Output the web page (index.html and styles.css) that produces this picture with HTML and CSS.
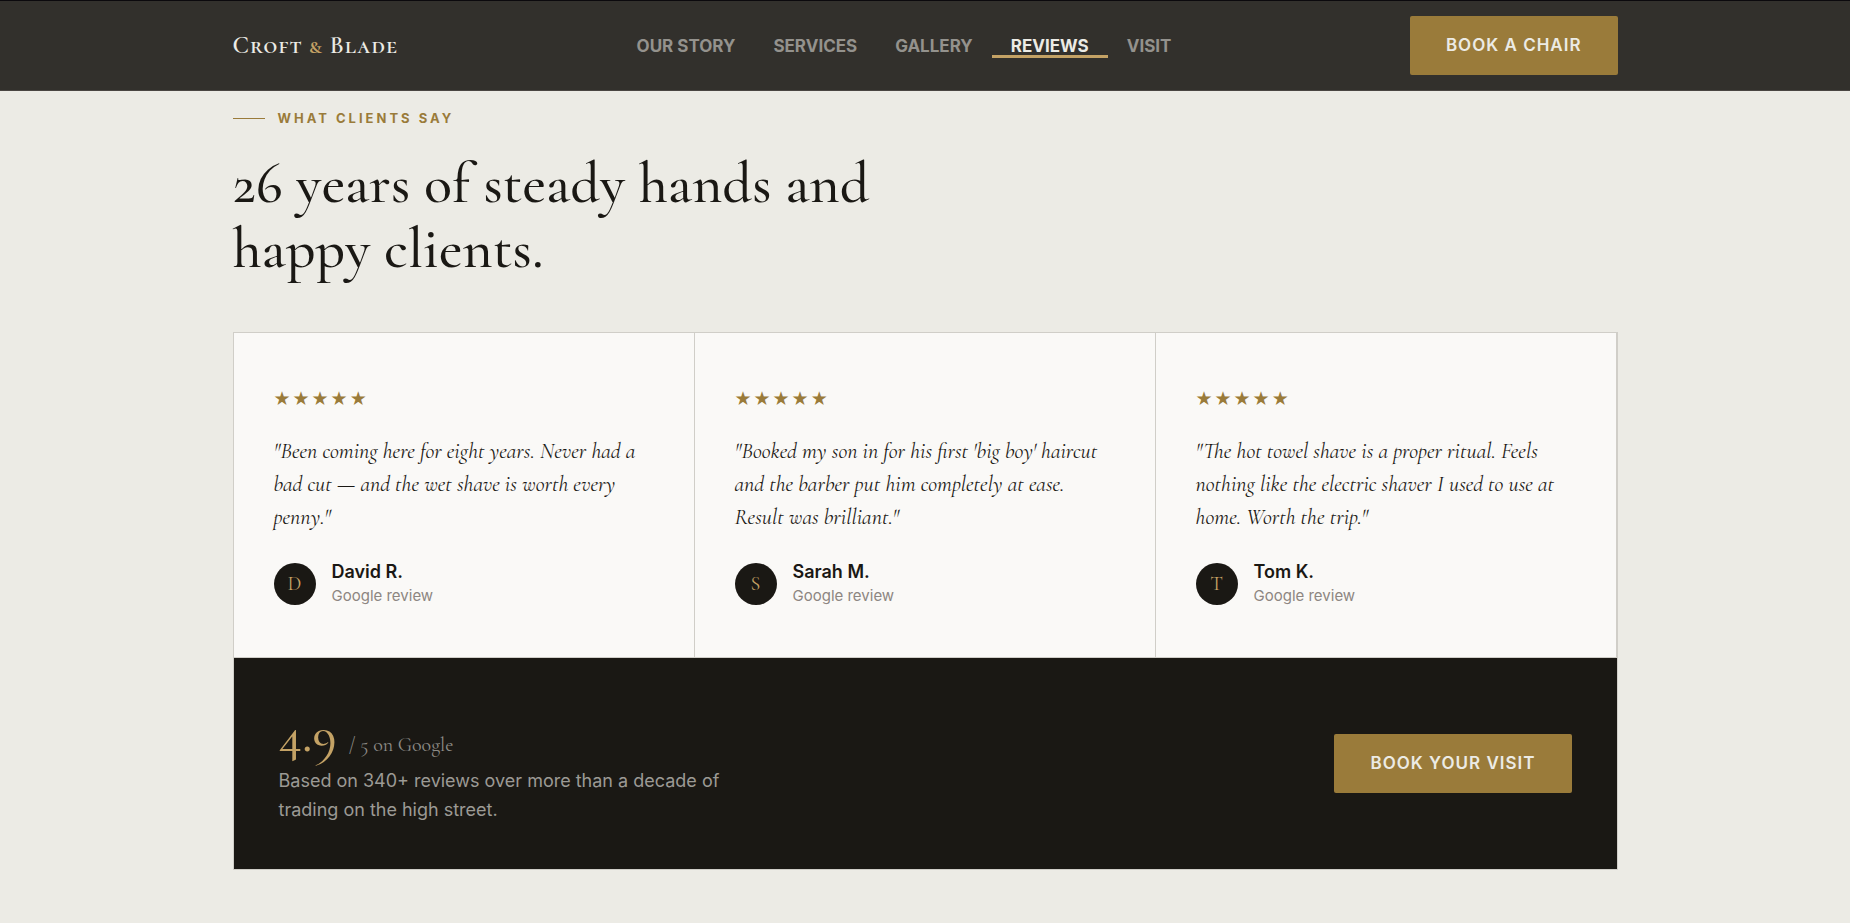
FILE: index.html
```html
<!DOCTYPE html>
<html lang="en">

<head>
    <meta charset="UTF-8">
    <meta name="viewport" content="width=device-width, initial-scale=1.0">
    <title>Croft &amp; Blade</title>
    <link rel="stylesheet" href="styles.css">
</head>

<body>
    <header class="site-header">
        <div class="container header-inner">
            <a class="logo" href="#">Croft <span>&amp;</span> Blade</a>
            <nav class="nav">
                <a href="#story">Our Story</a>
                <a href="#services">Services</a>
                <a href="#gallery">Gallery</a>
                <a href="#reviews" class="active">Reviews</a>
                <a href="#visit">Visit</a>
            </nav>
            <a class="btn" href="#book">Book a chair</a>
        </div>
    </header>

    <main class="container reviews" id="reviews">
        <p class="eyebrow">What clients say</p>
        <h2>26 years of steady hands and happy clients.</h2>

        <div class="review-grid">
            <article class="review">
                <div class="stars">★★★★★</div>
                <blockquote>"Been coming here for eight years. Never had a bad cut — and the wet shave is worth every penny."</blockquote>
                <div class="author">
                    <div class="avatar">D</div>
                    <div>
                        <div class="name">David R.</div>
                        <div class="source">Google review</div>
                    </div>
                </div>
            </article>
            <article class="review">
                <div class="stars">★★★★★</div>
                <blockquote>"Booked my son in for his first 'big boy' haircut and the barber put him completely at ease. Result was brilliant."</blockquote>
                <div class="author">
                    <div class="avatar">S</div>
                    <div>
                        <div class="name">Sarah M.</div>
                        <div class="source">Google review</div>
                    </div>
                </div>
            </article>
            <article class="review">
                <div class="stars">★★★★★</div>
                <blockquote>"The hot towel shave is a proper ritual. Feels nothing like the electric shaver I used to use at home. Worth the trip."</blockquote>
                <div class="author">
                    <div class="avatar">T</div>
                    <div>
                        <div class="name">Tom K.</div>
                        <div class="source">Google review</div>
                    </div>
                </div>
            </article>

            <div class="summary">
                <div class="summary-text">
                    <div class="score">4.9 <span>/ 5 on Google</span></div>
                    <p>Based on 340+ reviews over more than a decade of trading on the high street.</p>
                </div>
                <a class="btn" href="#book">Book your visit</a>
            </div>
        </div>
    </main>
</body>

</html>
```

FILE: styles.css
```css
* {
    box-sizing: border-box;
}

body {
    margin: 0;
    font-family: Inter, sans-serif;
    font-size: 18px;
    background-color: #ecebe5;
    color: #1a1814;
}

.container {
    width: 100%;
    max-width: 1385px;
    margin: 0 auto;
}

/* Header */
.site-header {
    background-color: #32302c;
    border-top: 1px solid #0b090d;
    border-bottom: 1px solid #4a4642;
}

.header-inner {
    display: flex;
    align-items: center;
    justify-content: space-between;
    padding: 15px 0;
}

.logo {
    font-family: "Cormorant Garamond", "Liberation Serif", serif;
    font-size: 24px;
    font-weight: 600;
    font-variant: small-caps;
    letter-spacing: 1px;
    color: #ecebe5;
    text-decoration: none;
}

.logo span {
    color: #c4a265;
}

.nav {
    display: flex;
}

.nav a {
    padding: 5px 19px 0;
    font-size: 17px;
    font-weight: 700;
    line-height: 17px;
    text-transform: uppercase;
    text-decoration: none;
    color: #94928d;
    border-bottom: 3px solid transparent;
}

.nav a.active {
    color: #ecebe5;
    border-bottom-color: #c4a265;
}

.btn {
    padding: 18px 36px;
    background-color: #9a7b3a;
    border-radius: 2px;
    color: #ecebe5;
    font-size: 17px;
    font-weight: 600;
    line-height: 23px;
    letter-spacing: 1px;
    text-transform: uppercase;
    text-decoration: none;
    white-space: nowrap;
}

/* Reviews */
.reviews {
    padding: 17px 0 53px;
}

.eyebrow {
    display: flex;
    align-items: center;
    gap: 13px;
    margin: 0 0 23px;
    font-size: 13px;
    font-weight: 700;
    line-height: 20px;
    letter-spacing: 3px;
    text-transform: uppercase;
    color: #9a7b3a;
}

.eyebrow::before {
    content: "";
    width: 32px;
    height: 1px;
    background-color: #9a7b3a;
}

h2 {
    max-width: 680px;
    margin: 0 0 51px;
    font-family: "Cormorant Garamond", "Liberation Serif", serif;
    font-size: 58px;
    font-weight: 500;
    line-height: 65px;
}

.review-grid {
    display: grid;
    grid-template-columns: repeat(3, 1fr);
    border: 1px solid #d0cec8;
}

.review {
    padding: 51px 40px 49px;
    background-color: #faf9f7;
    border-right: 1px solid #d0cec8;
    border-bottom: 1px solid #d0cec8;
}

.stars {
    font-family: "DejaVu Sans", sans-serif;
    font-size: 19px;
    line-height: 28px;
    letter-spacing: 2px;
    color: #9a7b3a;
}

blockquote {
    margin: 23px 0 26px;
    font-family: "Cormorant Garamond", "Liberation Serif", serif;
    font-size: 22px;
    font-style: italic;
    line-height: 33px;
}

.author {
    display: flex;
    align-items: center;
    gap: 16px;
}

.avatar {
    display: flex;
    align-items: center;
    justify-content: center;
    width: 42px;
    height: 42px;
    border-radius: 50%;
    background-color: #1a1814;
    color: #c4a265;
    font-family: "Cormorant Garamond", "Liberation Serif", serif;
    font-size: 20px;
}

.name {
    font-weight: 600;
    line-height: 24px;
}

.source {
    font-size: 15px;
    line-height: 24px;
    color: #8d8681;
}

.summary {
    grid-column: 1 / -1;
    display: flex;
    align-items: center;
    justify-content: space-between;
    padding: 45px;
    background-color: #1a1814;
}

.score {
    font-family: "Cormorant Garamond", "Liberation Serif", serif;
    font-size: 52px;
    font-weight: 500;
    line-height: 63px;
    color: #c4a265;
}

.score span {
    font-size: 20px;
    font-weight: 400;
    line-height: 1;
    color: #8d8b86;
}

.summary p {
    max-width: 450px;
    margin: 0;
    line-height: 29px;
    color: #9c9a95;
}
```
